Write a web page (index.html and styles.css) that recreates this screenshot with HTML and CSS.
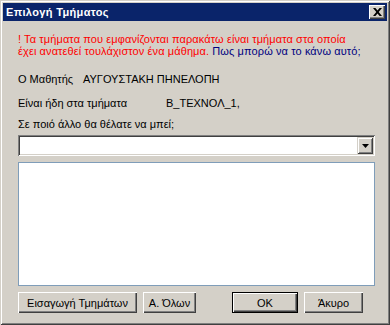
FILE: index.html
```html
<!DOCTYPE html>
<html lang="el">
<head>
  <meta charset="UTF-8">
  <title>Επιλογή Τμήματος</title>
  <link rel="stylesheet" href="styles.css">
</head>
<body>
  <div class="window">
    <div class="titlebar">
      <span class="title">Επιλογή Τμήματος</span>
      <button class="close" title="Κλείσιμο">
        <svg width="9" height="8" viewBox="0 0 9 8">
          <path d="M0 0h2.4l2.1 2.6 2.1-2.6h2.4l-3.3 4 3.3 4h-2.4l-2.1-2.6-2.1 2.6h-2.4l3.3-4z" fill="#000"/>
        </svg>
      </button>
    </div>

    <div class="content">
      <p class="notice">
        <span class="warn">! Τα τμήματα που εμφανίζονται παρακάτω είναι τμήματα στα οποία<br>
        έχει ανατεθεί τουλάχιστον ένα μάθημα.</span> <span class="help">Πως μπορώ να το κάνω αυτό;</span>
      </p>

      <div class="row row-student">
        <span class="label label-short">Ο Μαθητής</span>
        <span class="value">ΑΥΓΟΥΣΤΑΚΗ ΠΗΝΕΛΟΠΗ</span>
      </div>
      <div class="row row-classes">
        <span class="label label-long">Είναι ήδη στα τμήματα</span>
        <span class="value">Β_ΤΕΧΝΟΛ_1,</span>
      </div>
      <div class="row row-question">
        <span class="label">Σε ποιό άλλο θα θέλατε να μπεί;</span>
      </div>

      <div class="combo">
        <div class="combo-field"></div>
        <div class="combo-btn">
          <svg width="7" height="4" viewBox="0 0 7 4"><path d="M0 0h7l-3.5 4z" fill="#000"/></svg>
        </div>
      </div>

      <div class="listbox"></div>

      <div class="buttons">
        <button class="btn btn-import">Εισαγωγή Τμημάτων</button>
        <button class="btn btn-all">Α. Όλων</button>
        <button class="btn btn-ok default">OK</button>
        <button class="btn btn-cancel">Άκυρο</button>
      </div>
    </div>
  </div>
</body>
</html>
```

FILE: styles.css
```css
body {
  margin: 0;
  background-color: #d4d0c8;
  font-family: 'Liberation Sans', Arial, sans-serif;
  font-size: 11px;
}
.window {
  width: 390px;
  height: 325px;
  box-sizing: border-box;
  padding: 3px;
  background-color: #d4d0c8;
  box-shadow: inset 1px 1px 0 #d4d0c8, inset -1px -1px 0 #404040,
              inset 2px 2px 0 #ffffff, inset -2px -2px 0 #808080;
  display: flex;
  flex-direction: column;
}
.titlebar {
  height: 18px;
  background-color: #0a246a;
  display: flex;
  align-items: center;
  justify-content: space-between;
  padding: 0 2px 0 3px;
}
.title {
  color: #fff;
  font-weight: bold;
  font-size: 11px;
  letter-spacing: 0.35px;
}
.close {
  width: 16px;
  height: 14px;
  padding: 0;
  border: none;
  background-color: #d4d0c8;
  box-shadow: inset 1px 1px 0 #ffffff, inset -1px -1px 0 #404040,
              inset -2px -2px 0 #808080;
  display: flex;
  align-items: center;
  justify-content: center;
}
.content {
  padding: 12px 12px 0 15px;
}
.notice {
  margin: 0;
  line-height: 12px;
  letter-spacing: 0.1px;
}
.warn {
  color: #ff0000;
}
.help {
  color: #000080;
}
.row {
  display: flex;
  line-height: 13px;
  color: #000;
}
.row-student {
  margin-top: 16px;
}
.row-classes {
  margin-top: 11px;
}
.row-question {
  margin-top: 8px;
}
.label-short {
  width: 65px;
}
.label-long {
  width: 148px;
}
.combo {
  margin-top: 4px;
  width: 357px;
  height: 21px;
  box-sizing: border-box;
  padding: 2px;
  background-color: #fff;
  box-shadow: inset 1px 1px 0 #808080, inset -1px -1px 0 #ffffff,
              inset 2px 2px 0 #404040, inset -2px -2px 0 #d4d0c8;
  display: flex;
}
.combo-field {
  flex: 1;
}
.combo-btn {
  width: 16px;
  height: 17px;
  background-color: #d4d0c8;
  box-shadow: inset 1px 1px 0 #d4d0c8, inset -1px -1px 0 #404040,
              inset 2px 2px 0 #ffffff, inset -2px -2px 0 #808080;
  display: flex;
  align-items: center;
  justify-content: center;
}
.listbox {
  margin-top: 6px;
  width: 357px;
  height: 124px;
  box-sizing: border-box;
  border: 1px solid #7f9db9;
  background-color: #fff;
}
.buttons {
  margin-top: 6px;
  display: flex;
}
.btn {
  height: 21px;
  padding: 0;
  border: none;
  background-color: #d4d0c8;
  font-family: 'Liberation Sans', Arial, sans-serif;
  font-size: 11px;
  color: #000;
  box-shadow: inset 1px 1px 0 #ffffff, inset -1px -1px 0 #404040,
              inset -2px -2px 0 #808080;
}
.btn.default {
  border: 1px solid #000;
}
.btn-import {
  width: 119px;
}
.btn-all {
  width: 53px;
  margin-left: 6px;
}
.btn-ok {
  width: 66px;
  margin-left: 36px;
}
.btn-cancel {
  width: 59px;
  margin-left: 6px;
}
```
